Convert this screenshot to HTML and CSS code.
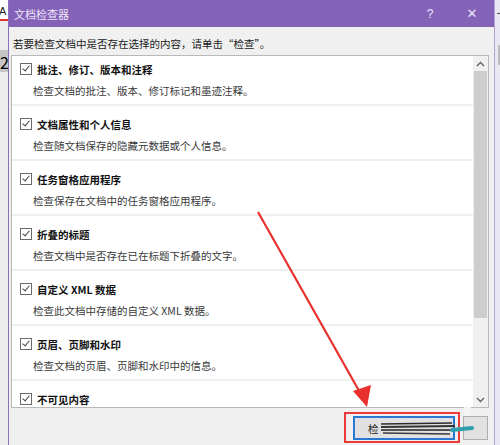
FILE: index.html
```html
<!DOCTYPE html>
<html>
<head>
    <meta charset="UTF-8">
    <title>文档检查器</title>
    <link rel="stylesheet" href="styles.css">
</head>
<body>
    <div class="screen">
        <!-- Word 窗口露出的一条 -->
        <div class="word-strip">
            <span class="word-a">A</span>
            <div class="word-ruler">2</div>
        </div>

        <div class="dialog">
            <div class="title-bar">
                <span class="title">文档检查器</span>
                <span class="help">?</span>
                <span class="close">✕</span>
            </div>
            <div class="dialog-body">
                <p class="hint">若要检查文档中是否存在选择的内容，请单击“检查”。</p>
                <div class="list-box">
                    <div class="list">
                        <div class="item">
                            <div class="item-head"><span class="check"></span>批注、修订、版本和注释</div>
                            <div class="item-desc">检查文档的批注、版本、修订标记和墨迹注释。</div>
                        </div>
                        <div class="item">
                            <div class="item-head"><span class="check"></span>文档属性和个人信息</div>
                            <div class="item-desc">检查随文档保存的隐藏元数据或个人信息。</div>
                        </div>
                        <div class="item">
                            <div class="item-head"><span class="check"></span>任务窗格应用程序</div>
                            <div class="item-desc">检查保存在文档中的任务窗格应用程序。</div>
                        </div>
                        <div class="item">
                            <div class="item-head"><span class="check"></span>折叠的标题</div>
                            <div class="item-desc">检查文档中是否存在已在标题下折叠的文字。</div>
                        </div>
                        <div class="item">
                            <div class="item-head"><span class="check"></span>自定义 XML 数据</div>
                            <div class="item-desc">检查此文档中存储的自定义 XML 数据。</div>
                        </div>
                        <div class="item">
                            <div class="item-head"><span class="check"></span>页眉、页脚和水印</div>
                            <div class="item-desc">检查文档的页眉、页脚和水印中的信息。</div>
                        </div>
                        <div class="item">
                            <div class="item-head"><span class="check"></span>不可见内容</div>
                        </div>
                    </div>
                    <div class="scrollbar">
                        <div class="sb-arrow">
                            <svg width="9" height="6" viewBox="0 0 9 6"><path d="M1 5 L4.5 1.5 L8 5" fill="none" stroke="#606060" stroke-width="1.3"/></svg>
                        </div>
                        <div class="sb-thumb"></div>
                        <div class="sb-track"></div>
                        <div class="sb-arrow">
                            <svg width="9" height="6" viewBox="0 0 9 6"><path d="M1 1 L4.5 4.5 L8 1" fill="none" stroke="#606060" stroke-width="1.3"/></svg>
                        </div>
                    </div>
                </div>
                <div class="buttons">
                    <button class="btn btn-primary">检</button>
                    <button class="btn btn-close"></button>
                </div>
            </div>
        </div>

        <div class="right-strip">
            <span class="right-mark"></span>
            <span class="right-block"></span>
        </div>

        <!-- 截图上的标注：红箭头、红框、涂抹 -->
        <svg class="annot" width="500" height="445" viewBox="0 0 500 445">
            <line x1="258" y1="212" x2="362" y2="396" stroke="#e8302c" stroke-width="2.2"/>
            <path d="M367 407 L353 391 L371 385 Z" fill="#e8302c"/>
            <rect x="345" y="413" width="114" height="29" fill="none" stroke="#ea3b3b" stroke-width="2"/>
            <line x1="381" y1="424" x2="452" y2="423" stroke="#2b2b2b" stroke-width="1.6"/>
            <line x1="381" y1="427" x2="455" y2="426" stroke="#333" stroke-width="1.8"/>
            <line x1="381" y1="430" x2="455" y2="430" stroke="#222" stroke-width="1.6"/>
            <line x1="383" y1="433" x2="450" y2="434" stroke="#3a3a3a" stroke-width="1.4"/>
            <line x1="452" y1="430" x2="472" y2="428" stroke="#2f9fae" stroke-width="4" stroke-linecap="round"/>
            <rect x="464" y="407" width="7" height="8" fill="#f4f4f4"/>
        </svg>
    </div>
</body>
</html>
```

FILE: styles.css
```css
body {
    margin: 0;
    font-family: "Noto Sans CJK SC", "Noto Sans", sans-serif;
    background-color: #f0f0f0;
}
.screen {
    position: relative;
    width: 500px;
    height: 445px;
    overflow: hidden;
    display: flex;
}
.word-strip {
    width: 8px;
    background-color: #ececec;
    display: flex;
    flex-direction: column;
    overflow: hidden;
}
.word-a {
    display: block;
    height: 19px;
    background-color: #fff;
    font-family: "Liberation Sans", sans-serif;
    font-size: 11px;
    line-height: 22px;
    color: #222;
    border-bottom: 2px solid #d33;
    text-indent: -1px;
}
.word-ruler {
    margin-top: 29px;
    height: 22px;
    background-color: #c6c6c6;
}
.dialog {
    width: 485px;
    border-left: 1px solid #8a6fc0;
    display: flex;
    flex-direction: column;
    background-color: #f0f0f0;
}
.title-bar {
    height: 27px;
    background-color: #8462b8;
    display: flex;
    align-items: center;
    color: #eee6f8;
}
.title {
    margin-left: 5px;
    font-size: 11px;
    flex: 1;
}
.help {
    font-family: "Liberation Sans", sans-serif;
    font-size: 12px;
    width: 16px;
    text-align: center;
    margin-right: 26px;
}
.close {
    font-family: "DejaVu Sans", sans-serif;
    font-size: 13px;
    width: 16px;
    text-align: center;
    margin-right: 14px;
}
.dialog-body {
    flex: 1;
    display: flex;
    flex-direction: column;
    padding: 9px 5px 0 2px;
}
.hint {
    margin: 0 0 3px 2px;
    font-size: 10.5px;
    line-height: 16px;
    color: #1a1a1a;
}
.list-box {
    height: 351px;
    border: 1px solid #b9b9b9;
    background-color: #fff;
    display: flex;
    overflow: hidden;
}
.list {
    flex: 1;
    margin-top: -5px;
}
.item {
    height: 55px;
    padding-top: 9px;
    border-bottom: 2px solid #efefef;
    box-sizing: border-box;
}
.item-head {
    display: flex;
    align-items: center;
    height: 18px;
    font-size: 10.5px;
    font-weight: bold;
    color: #111;
}
.check {
    width: 10px;
    height: 10px;
    border: 1px solid #6a6a6a;
    margin: 0 5px 0 8px;
    position: relative;
}
.check::after {
    content: "";
    position: absolute;
    left: 3px;
    top: 0px;
    width: 3px;
    height: 6px;
    border-right: 1px solid #444;
    border-bottom: 1px solid #444;
    transform: rotate(40deg);
}
.item-desc {
    margin: 4px 0 0 21px;
    height: 18px;
    line-height: 18px;
    font-size: 10.5px;
    color: #3a3a3a;
}
.scrollbar {
    width: 15px;
    display: flex;
    flex-direction: column;
    background-color: #f0f0f0;
}
.sb-arrow {
    height: 15px;
    display: flex;
    align-items: center;
    justify-content: center;
}
.sb-thumb {
    height: 247px;
    margin: 0 1px;
    background-color: #cdcdcd;
}
.sb-track {
    flex: 1;
}
.buttons {
    display: flex;
    margin-top: 8px;
    padding-left: 342px;
    gap: 8px;
}
.btn {
    height: 24px;
    border: 1px solid #adadad;
    background-color: #e1e1e1;
    font-family: "Noto Sans CJK SC", sans-serif;
    font-size: 10.5px;
    padding: 0;
}
.btn-primary {
    width: 102px;
    border: 1px solid #2878d4;
    box-shadow: inset 0 0 0 1px #2878d4;
    text-align: left;
    padding-left: 14px;
    color: #222;
}
.btn-close {
    width: 25px;
}
.right-strip {
    flex: 1;
    background-color: #e9e7f1;
    border-left: 1px solid #b3a6d4;
    position: relative;
}
.right-mark {
    position: absolute;
    left: 2px;
    top: 13px;
    width: 4px;
    height: 1px;
    background-color: #555;
}
.right-block {
    position: absolute;
    left: 3px;
    top: 45px;
    width: 3px;
    height: 20px;
    background-color: #bdbdbd;
}
.annot {
    position: absolute;
    left: 0;
    top: 0;
    pointer-events: none;
}
```
